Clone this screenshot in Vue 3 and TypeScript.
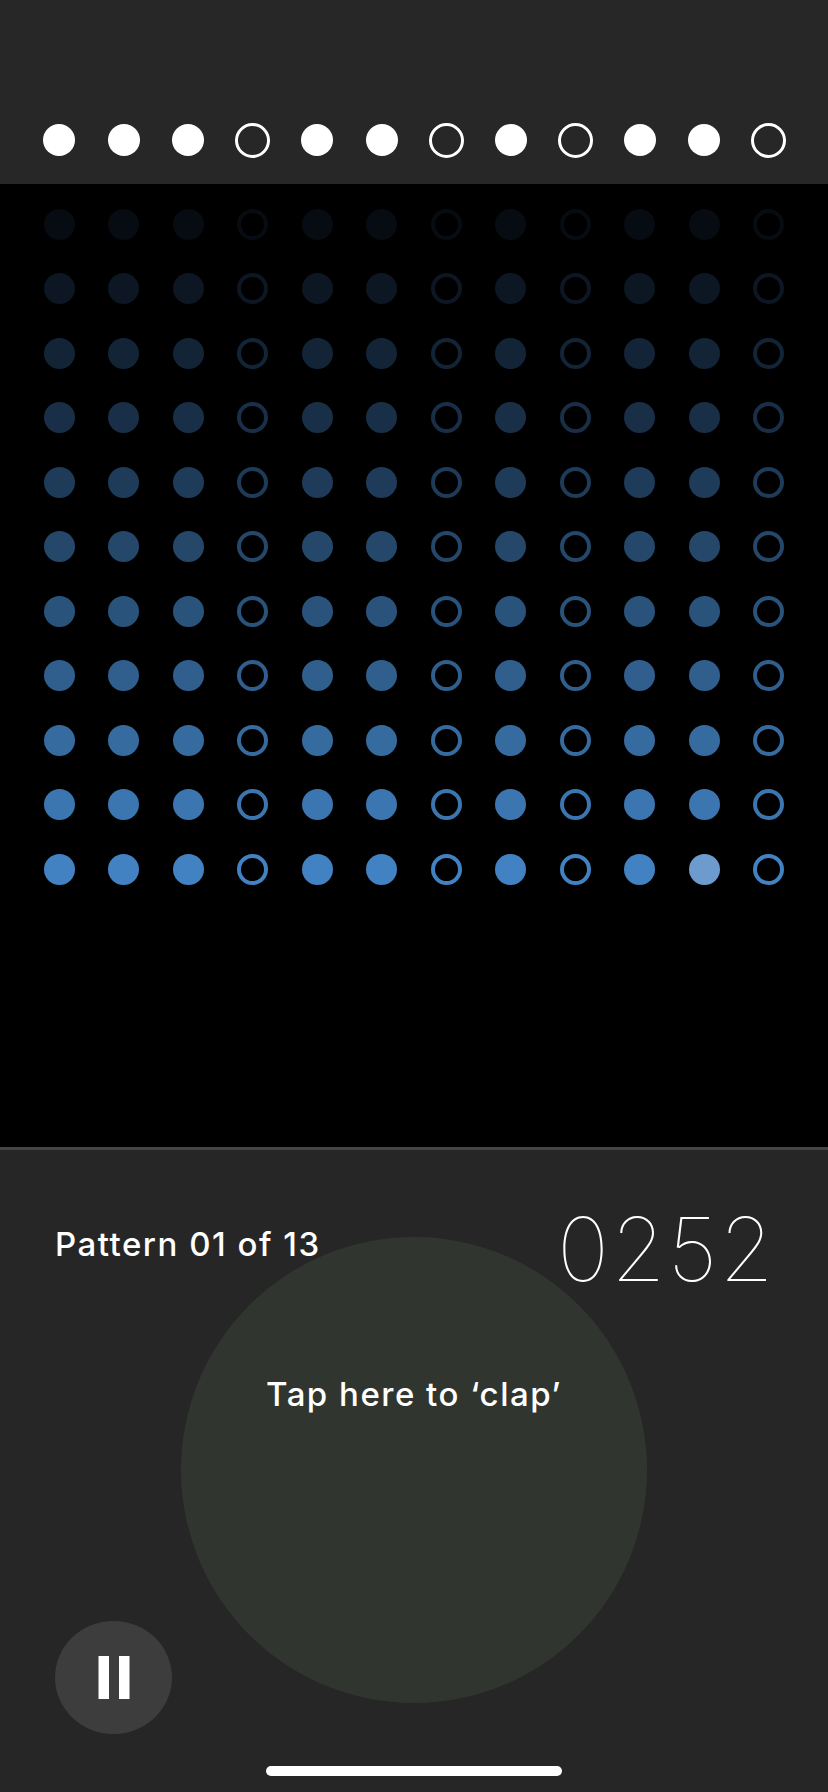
<script setup lang="ts">
const pattern = [1, 1, 1, 0, 1, 1, 0, 1, 0, 1, 1, 0];
const rows = Array.from({ length: 11 }, (_, i) => (i + 1) / 11);

// the note being played right now
const activeRow = 10;
const activeCol = 10;
</script>

<template>
  <div class="screen">
    <header class="top">
      <div v-for="(on, i) in pattern" :key="i" class="cell">
        <span class="dot" :class="on ? 'solid' : 'ring'"></span>
      </div>
    </header>

    <main class="grid">
      <template v-for="(level, r) in rows" :key="r">
        <div v-for="(on, c) in pattern" :key="c" class="cell">
          <span
            class="note"
            :class="[on ? 'solid' : 'ring', { active: r === activeRow && c === activeCol }]"
            :style="{ opacity: level }"
          ></span>
        </div>
      </template>
    </main>

    <section class="panel">
      <div class="clap">
        <span class="clap-label">Tap here to ‘clap’</span>
      </div>
      <div class="info">
        <span class="pattern-name">Pattern 01 of 13</span>
        <span class="score">0252</span>
      </div>
      <button class="pause" aria-label="Pause">
        <svg width="32" height="44" viewBox="0 0 32 44">
          <rect x="0.5" y="0" width="10.5" height="43" fill="#fff" />
          <rect x="21" y="0" width="10.5" height="43" fill="#fff" />
        </svg>
      </button>
      <div class="home-bar"></div>
    </section>
  </div>
</template>

<style>
html,
body {
  margin: 0;
  background: #000;
}
</style>

<style scoped>
.screen {
  width: 828px;
  height: 1792px;
  display: flex;
  flex-direction: column;
  background: #000;
  font-family: "Inter", "Liberation Sans", sans-serif;
  color: #fff;
  overflow: hidden;
}

.top {
  height: 184px;
  flex: none;
  box-sizing: border-box;
  padding: 108px 27px 0;
  background: #272727;
  display: grid;
  grid-template-columns: repeat(12, 64.5px);
  grid-auto-rows: 64px;
}

.cell {
  display: flex;
  align-items: center;
  justify-content: center;
}

.dot {
  display: block;
  box-sizing: border-box;
  border-radius: 50%;
}
.dot.solid {
  width: 32px;
  height: 32px;
  background: #fff;
}
.dot.ring {
  width: 35px;
  height: 35px;
  border: 3px solid #fff;
}

.grid {
  flex: 1;
  box-sizing: border-box;
  padding: 8px 27px 0;
  display: grid;
  grid-template-columns: repeat(12, 64.5px);
  grid-auto-rows: 64.5px;
}

.note {
  display: block;
  box-sizing: border-box;
  width: 31px;
  height: 31px;
  border-radius: 50%;
}
.note.solid {
  background: #4282c3;
}
.note.ring {
  border: 4px solid #4282c3;
}
.note.active {
  background: #6d9bcd;
}

.panel {
  position: relative;
  height: 645px;
  flex: none;
  box-sizing: border-box;
  border-top: 3px solid #444;
  background: #262626;
}

.clap {
  position: absolute;
  left: 181px;
  top: 87px;
  width: 466px;
  height: 466px;
  border-radius: 50%;
  background: #31352f;
  display: flex;
  justify-content: center;
}
.clap-label {
  margin-top: 137px;
  font-size: 33px;
  line-height: 40px;
  font-weight: 500;
  letter-spacing: 1.5px;
  white-space: nowrap;
}

.info {
  position: relative;
  display: flex;
  justify-content: space-between;
  align-items: center;
  padding: 55px 52px 0 55px;
  height: 88px;
}
.pattern-name {
  margin-bottom: 10px;
  font-size: 33px;
  line-height: 40px;
  font-weight: 500;
  letter-spacing: 1.5px;
}
.score {
  font-size: 88px;
  line-height: 88px;
  font-weight: 100;
  letter-spacing: 2px;
}

.pause {
  position: absolute;
  left: 55px;
  top: 471px;
  width: 117px;
  height: 113px;
  padding: 0;
  border: none;
  border-radius: 50%;
  background: #3d3d3d;
  display: flex;
  align-items: center;
  justify-content: center;
}

.home-bar {
  position: absolute;
  left: 266px;
  top: 616px;
  width: 296px;
  height: 10px;
  border-radius: 5px;
  background: #fff;
}
</style>
